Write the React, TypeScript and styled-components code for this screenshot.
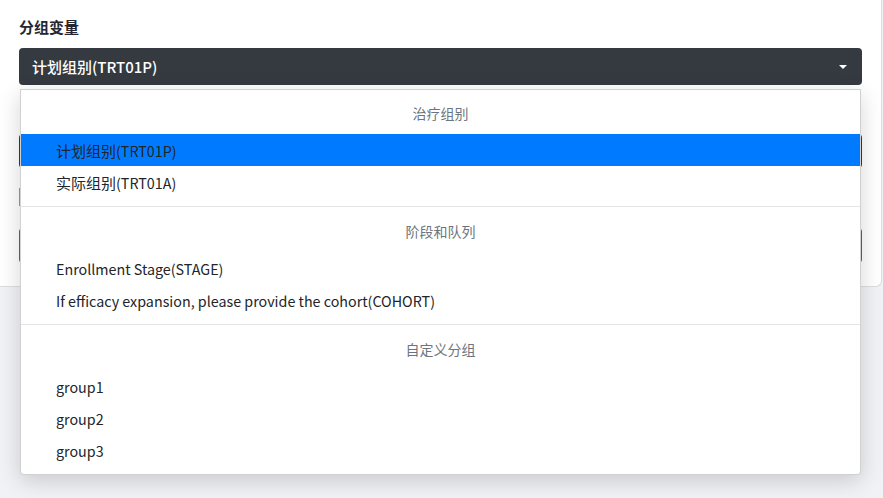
import React from "react";
import styled, { createGlobalStyle } from "styled-components";

const Global = createGlobalStyle`
  html, body {
    margin: 0;
    padding: 0;
    min-height: 100%;
    background: #f0f2f6;
    font-family: "Noto Sans CJK SC", "Noto Sans", sans-serif;
  }
  html { height: 100%; }
  body { height: 100%; }
  #root { min-height: 100%; }
`;

const Card = styled.div`
  position: relative;
  width: 882px;
  height: 287px;
  box-sizing: border-box;
  padding: 16px 19px 0 19px;
  background: #ffffff;
  border-right: 1px solid #dcdde1;
  border-bottom: 1px solid #dcdde1;
  border-bottom-right-radius: 6px;
`;

const Label = styled.div`
  font-size: 15px;
  font-weight: 700;
  color: #262730;
  line-height: 22px;
  margin-bottom: 10px;
`;

const SelectWrap = styled.div`
  position: relative;
`;

const SelectButton = styled.div`
  display: flex;
  align-items: center;
  justify-content: space-between;
  height: 37px;
  box-sizing: border-box;
  padding: 0 13px;
  border-radius: 4px;
  background: #343a40;
  color: #ffffff;
  font-size: 15px;
  font-weight: 500;
`;

const Caret = styled.span`
  width: 0;
  height: 0;
  border-top: 4px solid #ffffff;
  border-left: 4px solid transparent;
  border-right: 4px solid transparent;
  margin-right: 2px;
`;

const Menu = styled.div`
  position: absolute;
  top: 41px;
  left: 1px;
  right: 1px;
  z-index: 10;
  background: #ffffff;
  border: 1px solid rgba(0, 0, 0, 0.18);
  border-radius: 0 0 4px 4px;
  box-shadow: 0 6px 22px rgba(0, 0, 0, 0.17);
  padding: 7px 0 8px;
`;

const GroupHeader = styled.div`
  height: 37px;
  box-sizing: border-box;
  padding-bottom: 5px;
  display: flex;
  align-items: center;
  justify-content: center;
  font-size: 14px;
  color: #6c757d;
`;

const Option = styled.div<{ $active?: boolean }>`
  height: 32px;
  display: flex;
  align-items: center;
  padding-left: 35px;
  font-size: 14.3px;
  color: #212529;
  background: ${(p) => (p.$active ? "#007bff" : "transparent")};
`;

const Han = styled.span`
  font-size: 15px;
`;

const Divider = styled.div`
  height: 1px;
  margin: 8px 0;
  background: #e5e5e5;
`;

const HiddenLabel = styled.div`
  margin-top: 18px;
  font-size: 14px;
  color: #8a6d3b;
  height: 22px;
`;

const HiddenSelect = styled.div`
  height: 34px;
  margin-top: 9px;
  border-radius: 4px;
  background: #343a40;
`;

const HiddenText = styled.div`
  margin-top: 20px;
  height: 18px;
  width: 120px;
  border-left: 1px solid #999;
`;

const BlueButton = styled.div`
  margin-top: 22px;
  height: 35px;
  border-radius: 4px;
  background: #1a73c8;
`;

const groups = [
  { title: "治疗组别", items: ["计划组别(TRT01P)", "实际组别(TRT01A)"] },
  {
    title: "阶段和队列",
    items: [
      "Enrollment Stage(STAGE)",
      "If efficacy expansion, please provide the cohort(COHORT)",
    ],
  },
  { title: "自定义分组", items: ["group1", "group2", "group3"] },
];

// CJK runs keep the full size, Latin runs sit a touch smaller
function Mixed({ text }: { text: string }) {
  return (
    <span>
      {text.split(/([\u4e00-\u9fff]+)/).map((part, i) =>
        /[\u4e00-\u9fff]/.test(part) ? <Han key={i}>{part}</Han> : part
      )}
    </span>
  );
}

export default function App() {
  const selected = "计划组别(TRT01P)";
  return (
    <>
      <Global />
      <Card>
        <Label>分组变量</Label>
        <SelectWrap>
          <SelectButton>
            <span>{selected}</span>
            <Caret />
          </SelectButton>
          <Menu>
            {groups.map((g, i) => (
              <React.Fragment key={g.title}>
                {i > 0 && <Divider />}
                <GroupHeader>{g.title}</GroupHeader>
                {g.items.map((it) => (
                  <Option key={it} $active={it === selected}>
                    <Mixed text={it} />
                  </Option>
                ))}
              </React.Fragment>
            ))}
          </Menu>
        </SelectWrap>
        <HiddenLabel>·</HiddenLabel>
        <HiddenSelect />
        <HiddenText />
        <BlueButton />
      </Card>
    </>
  );
}
